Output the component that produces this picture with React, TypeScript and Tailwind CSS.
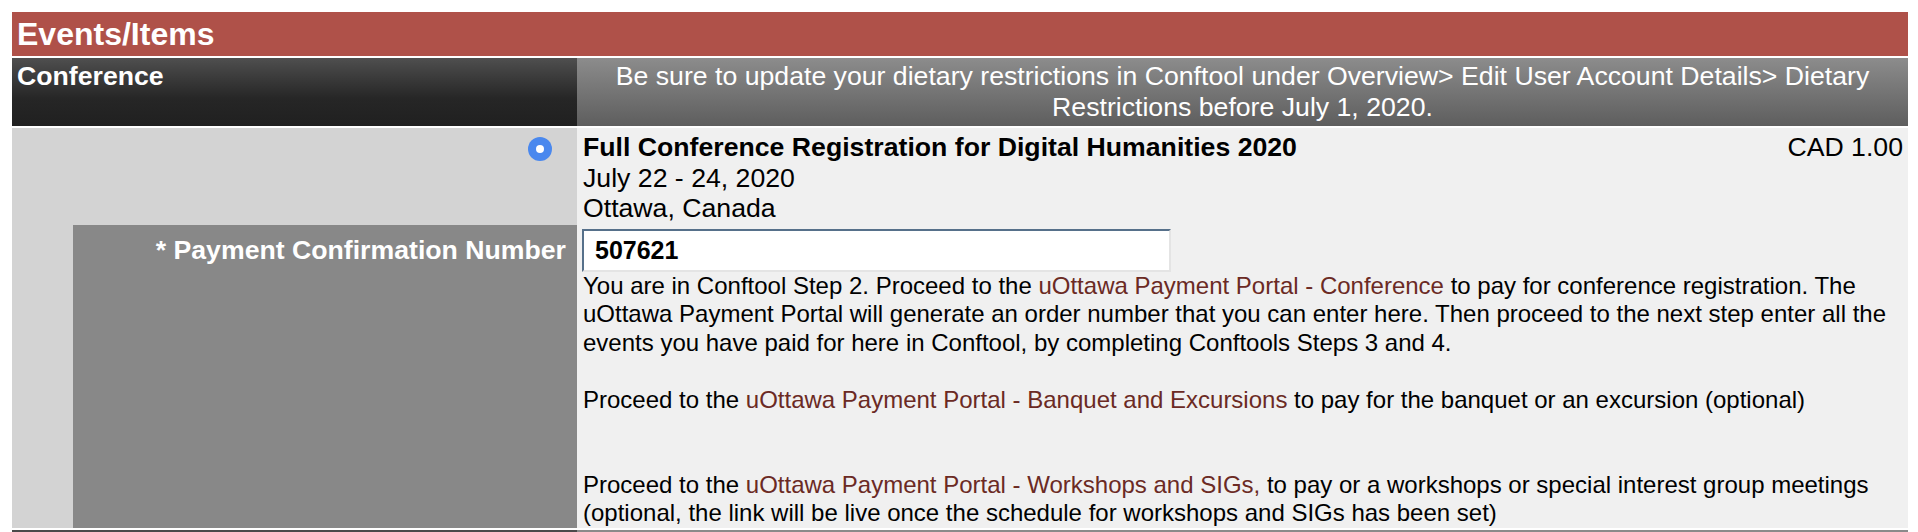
import React from "react";

const linkCls = "text-[#6b2a24]";

export default function App() {
  return (
    <div className="h-[532px] overflow-hidden bg-white pt-[12px] pl-[12px] pr-[10px] font-['Liberation_Sans',Arial,Helvetica,sans-serif] text-[26.67px] leading-[30.6px] text-black">
      {/* Title bar */}
      <div className="h-[44px] bg-[#af5149] pl-[5px] text-[32px] font-bold leading-[44px] text-white">
        Events/Items
      </div>

      {/* Header row */}
      <div className="mt-[2px] grid h-[68px] grid-cols-[565px_1fr]">
        <div className="bg-linear-to-b from-[#4f4f4f] via-[#262626] via-60% to-[#202020] pl-[5px] pt-[3px] font-bold text-white">
          Conference
        </div>
        <div className="bg-linear-to-b from-[#8c8c8c] to-[#5e5e5e] px-[5px] pt-[3px] text-center text-white">
          Be sure to update your dietary restrictions in Conftool under Overview&gt; Edit User Account Details&gt; Dietary Restrictions before July 1, 2020.
        </div>
      </div>

      {/* Item rows */}
      <div className="mt-[2px] grid grid-cols-[565px_1fr]">
        {/* Row 1 left: radio */}
        <div className="flex h-[97px] justify-end bg-[#d3d3d3] pr-[25px] pt-[9px]">
          <span className="flex h-[24px] w-[24px] items-center justify-center rounded-full bg-[#4a88ee]">
            <span className="h-[8px] w-[8px] rounded-full bg-white" />
          </span>
        </div>
        {/* Row 1 right */}
        <div className="flex justify-between bg-[#f0f0f0] pl-[6px] pr-[5px] pt-[4px]">
          <div>
            <div className="font-bold">Full Conference Registration for Digital Humanities 2020</div>
            <div>July 22 - 24, 2020</div>
            <div>Ottawa, Canada</div>
          </div>
          <div>CAD 1.00</div>
        </div>

        {/* Row 2 left: label */}
        <div className="flex bg-[#d3d3d3]">
          <div className="w-[61px] shrink-0" />
          <div className="flex-1 bg-[#888888] pr-[11px] pt-[10px] text-right font-bold text-white">
            * Payment Confirmation Number
          </div>
        </div>
        {/* Row 2 right */}
        <div className="h-[303px] bg-[#f0f0f0] pl-[5px] pr-[5px] pt-[4px]">
          <div className="flex h-[43px] w-[589px] items-center border-2 border-t-[#56708a] border-l-[#56708a] border-b-[#e4e4e4] border-r-[#e4e4e4] bg-white pl-[11px] text-[25px] font-bold">
            507621
          </div>
          <div className="pl-[1px] text-[24px] leading-[28.4px]">
            You are in Conftool Step 2. Proceed to the{" "}
            <span className={linkCls}>uOttawa Payment Portal - Conference</span> to pay for conference registration. The uOttawa Payment Portal will generate an order number that you can enter here. Then proceed to the next step enter all the events you have paid for here in Conftool, by completing Conftools Steps 3 and 4.
            <br />
            <br />
            Proceed to the <span className={linkCls}>uOttawa Payment Portal - Banquet and Excursions</span> to pay for the banquet or an excursion (optional)
            <br />
            <br />
            <br />
            Proceed to the <span className={linkCls}>uOttawa Payment Portal - Workshops and SIGs,</span> to pay or a workshops or special interest group meetings (optional, the link will be live once the schedule for workshops and SIGs has been set)
          </div>
        </div>
      </div>

      {/* Next header stub (clipped) */}
      <div className="mt-[2px] grid h-[40px] grid-cols-[565px_1fr]">
        <div className="bg-[#4a4a4a]" />
        <div className="bg-[#8a8a8a]" />
      </div>
    </div>
  );
}
